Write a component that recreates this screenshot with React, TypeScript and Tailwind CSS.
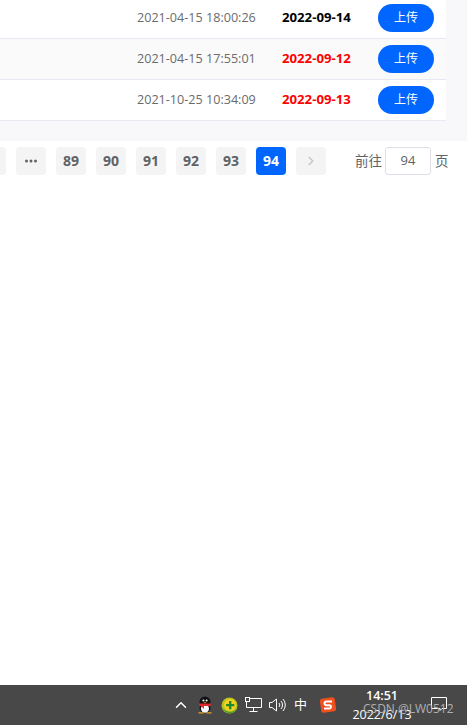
import { LuChevronRight, LuChevronUp } from 'react-icons/lu'

const font = '[font-family:"Open_Sans","Noto_Sans_CJK_SC",sans-serif]'

const rows = [
  { time: '2021-04-15 18:00:26', date: '2022-09-14', color: 'text-black', bg: 'bg-white' },
  { time: '2021-04-15 17:55:01', date: '2022-09-12', color: 'text-[#ff0000]', bg: 'bg-[#fafafa]' },
  { time: '2021-10-25 10:34:09', date: '2022-09-13', color: 'text-[#ff0000]', bg: 'bg-white' },
]

function PageBtn({ label, active }: { label: string; active?: boolean }) {
  return (
    <div className={`flex h-7 w-[30px] shrink-0 items-center justify-center rounded-sm text-sm font-bold ${active ? 'bg-[#0066ff] text-white' : 'bg-[#f4f4f5] text-[#606266]'}`}>
      {label}
    </div>
  )
}

function Dots() {
  return (
    <div className="flex h-7 w-[30px] shrink-0 items-center justify-center rounded-sm bg-[#f4f4f5]">
      <svg width="12" height="4" viewBox="0 0 12 4" fill="#606266">
        <circle cx="1.500" cy="2" r="1.500" />
        <circle cx="6" cy="2" r="1.500" />
        <circle cx="10.500" cy="2" r="1.500" />
      </svg>
    </div>
  )
}

function QQ() {
  return (
    <svg width="18" height="18" viewBox="0 0 18 18">
      <ellipse cx="9" cy="6" rx="5.500" ry="5.500" fill="#111" />
      <ellipse cx="9" cy="12" rx="5.500" ry="5" fill="#111" />
      <ellipse cx="9" cy="12.500" rx="4" ry="4.300" fill="#fff" />
      <rect x="3" y="7.500" width="12" height="2.500" rx="1" fill="#e02a2a" />
      <path d="M4.500 9.500h3.500v3.500z" fill="#e02a2a" />
      <circle cx="7.400" cy="4.400" r="1" fill="#fff" />
      <circle cx="10.600" cy="4.400" r="1" fill="#fff" />
      <path d="M7.500 6h3l-1.500 1.300z" fill="#e9a11a" />
      <path d="M2.500 17.500h5v-1.300h-5zM10.500 17.500h5v-1.300h-5z" fill="#e9a11a" />
    </svg>
  )
}

function Shield360() {
  return (
    <svg width="17" height="17" viewBox="0 0 17 17">
      <circle cx="8.500" cy="8.500" r="8" fill="#b8c41f" />
      <path d="M1 10a8 8 0 0 0 15 1.500A9 9 0 0 1 1 10z" fill="#3f9a2e" />
      <circle cx="9" cy="8" r="6" fill="#f4d21f" />
      <path d="M8 4h2.400v2.900h2.900v2.400h-2.900v2.900H8V9.300H5.100V6.900H8z" fill="#1d8a2c" />
    </svg>
  )
}

function Network() {
  return (
    <svg width="17" height="16" viewBox="0 0 17 16" fill="none" stroke="#fff" strokeWidth="1">
      <path d="M4.500 1.500H16.500V10.500H1.500V5" />
      <rect x="0.500" y="0.500" width="4" height="4" />
      <path d="M8.500 10.500v4M4.500 14.500h8" />
    </svg>
  )
}

function Volume() {
  return (
    <svg width="17" height="14" viewBox="0 0 17 14" fill="none" stroke="#fff" strokeWidth="1">
      <path d="M0.500 4.500H3L7.500 1V13L3 9.500H0.500z" />
      <path d="M10 5a3 3 0 0 1 0 4M12 3a6 6 0 0 1 0 8M14 1a9 9 0 0 1 0 12" />
    </svg>
  )
}

function Sogou() {
  return (
    <svg width="16" height="16" viewBox="0 0 16 16">
      <rect x="0.500" y="1" width="15" height="14" rx="2.500" transform="rotate(-8 8 8)" fill="#f0501e" />
      <path d="M12 4.500H6.500Q4.500 4.500 4.500 6.300T6.500 8.200H9.500Q11 8.200 11 9.700T9.500 11.500H4" fill="none" stroke="#fff" strokeWidth="2" />
    </svg>
  )
}

export default function App() {
  return (
    <div className={`flex h-[725px] w-[467px] flex-col overflow-hidden bg-white ${font}`}>
      <div className="flex h-[141px] shrink-0 overflow-hidden bg-[#f8f8fa]">
        <div className="mt-[-2px] w-[446px] shrink-0 self-start">
          {rows.map((r) => (
            <div key={r.time} className={`flex h-[41px] items-center border-b border-[#e6e9f2] pb-px ${r.bg}`}>
              <span className="ml-[137px] mt-[2px] w-[145px] text-[12.6px] text-[#6b6b6b]">{r.time}</span>
              <span className={`mt-px w-[96px] text-[13.2px] font-bold ${r.color}`}>{r.date}</span>
              <button className="h-7 w-14 rounded-full bg-[#0066ff] text-xs text-white">上传</button>
            </div>
          ))}
        </div>
      </div>

      <div className="mt-1.5 flex h-7 shrink-0 items-center">
        <div className="ml-[-24px] flex gap-2.5">
          <PageBtn label="" />
          <Dots />
          <PageBtn label="89" />
          <PageBtn label="90" />
          <PageBtn label="91" />
          <PageBtn label="92" />
          <PageBtn label="93" />
          <PageBtn label="94" active />
          <div className="flex h-7 w-[30px] items-center justify-center rounded-sm bg-[#f4f4f5] text-[#c0c4cc]">
            <LuChevronRight size={14} strokeWidth={2.5} />
          </div>
        </div>
        <span className="ml-[29px] text-[13.5px] text-[#606266]">前往</span>
        <div className="ml-[3px] flex h-7 w-[46px] items-center justify-center rounded-[3px] border border-[#dcdfe6] text-[13px] text-[#606266]">94</div>
        <span className="ml-1 text-[13.5px] text-[#606266]">页</span>
      </div>

      <div className="flex-1" />

      <div className="relative flex h-10 shrink-0 items-center bg-[#484848] text-white">
        <LuChevronUp size={18} className="ml-[172px] text-white" />
        <div className="ml-1.5"><QQ /></div>
        <div className="ml-[7px]"><Shield360 /></div>
        <div className="ml-[7px]"><Network /></div>
        <div className="ml-[7px]"><Volume /></div>
        <span className="ml-[8px] w-[14px] text-[13px]">中</span>
        <div className="ml-[12px]"><Sogou /></div>
        <div className="ml-[16px] flex w-[60px] flex-col items-center text-[12.5px] leading-[19px]">
          <span className="font-semibold">14:51</span>
          <span>2022/6/13</span>
        </div>
        <svg className="mb-[3px] ml-[19px]" width="16" height="14" viewBox="0 0 16 14" fill="none" stroke="#fff">
          <path d="M0.500 0.500H15.500V11.500H11L9 13.500V11.500H0.500z" />
        </svg>
        <span className="absolute left-[363px] top-[16px] text-xs text-[#b0b0b0]">CSDN @LW0512</span>
      </div>
    </div>
  )
}
